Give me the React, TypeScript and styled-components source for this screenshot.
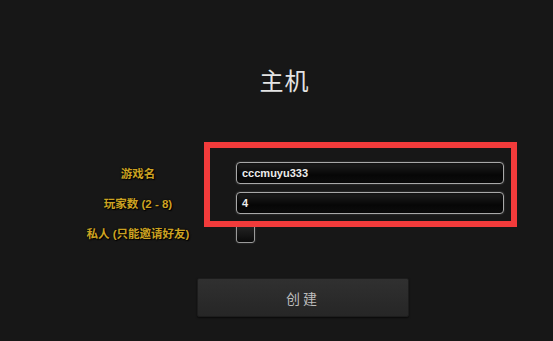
import React from "react";
import styled, { createGlobalStyle } from "styled-components";

const GlobalStyle = createGlobalStyle`
  html, body {
    margin: 0;
    padding: 0;
    background: #171717;
  }
  body {
    font-family: "Liberation Sans", "Noto Sans CJK SC", sans-serif;
  }
`;

const Screen = styled.div`
  position: relative;
  width: 553px;
  height: 341px;
  overflow: hidden;
  background: #171717;
`;

const Title = styled.h1`
  margin: 0;
  padding-top: 64px;
  width: 569px;
  text-align: center;
  font-family: "Noto Sans CJK SC", sans-serif;
  font-weight: 400;
  font-size: 24px;
  line-height: 32px;
  letter-spacing: 1px;
  color: #e4e4e4;
`;

const Form = styled.div`
  display: grid;
  grid-template-columns: 136px 268px;
  grid-auto-rows: 30px;
  column-gap: 30px;
  align-items: center;
  margin: 62px 0 0 70px;
`;

const Label = styled.label`
  text-align: center;
  font-family: "Liberation Sans", "Noto Sans CJK SC", sans-serif;
  font-weight: 700;
  font-size: 11.5px;
  color: #cda322;
  text-shadow: 0 0 2px #000, 1px 1px 1px #000;
  white-space: nowrap;
`;

const TextInput = styled.div`
  box-sizing: border-box;
  height: 22px;
  padding: 0 5px;
  display: flex;
  align-items: center;
  border: 1.5px solid #a8a8a8;
  border-radius: 4px;
  background: linear-gradient(#1e1e1e, #060606 60%, #0c0c0c);
  box-shadow: 0 0 2px rgba(200, 200, 200, 0.35), inset 0 0 3px rgba(0, 0, 0, 0.9);
  font-family: "Liberation Sans", sans-serif;
  font-weight: 700;
  font-size: 11px;
  color: #ececec;
`;

const CheckBox = styled.div`
  box-sizing: border-box;
  width: 19px;
  height: 19px;
  border: 1.5px solid #9a9a9a;
  border-radius: 3px;
  background: linear-gradient(#262626, #0a0a0a);
  box-shadow: 0 0 2px rgba(200, 200, 200, 0.3);
`;

const CreateButton = styled.button`
  display: block;
  box-sizing: border-box;
  width: 212px;
  height: 39px;
  margin: 30px 0 0 197px;
  border: 1px solid #1d1d1d;
  border-radius: 2px;
  background: linear-gradient(#303030, #262626);
  box-shadow: 0 1px 2px rgba(0, 0, 0, 0.6);
  font-family: "Noto Sans CJK SC", sans-serif;
  font-size: 14px;
  letter-spacing: 3px;
  color: #bcbcbc;
  cursor: pointer;
`;

const Highlight = styled.div`
  position: absolute;
  left: 204px;
  top: 142px;
  width: 313px;
  height: 85px;
  box-sizing: border-box;
  border: 6px solid #f23b3b;
  pointer-events: none;
`;

export default function App() {
  return (
    <>
      <GlobalStyle />
      <Screen>
        <Title>主机</Title>
        <Form>
          <Label>游戏名</Label>
          <TextInput>cccmuyu333</TextInput>
          <Label>玩家数 (2 - 8)</Label>
          <TextInput>4</TextInput>
          <Label>私人 (只能邀请好友)</Label>
          <CheckBox />
        </Form>
        <CreateButton>创建</CreateButton>
        <Highlight />
      </Screen>
    </>
  );
}
